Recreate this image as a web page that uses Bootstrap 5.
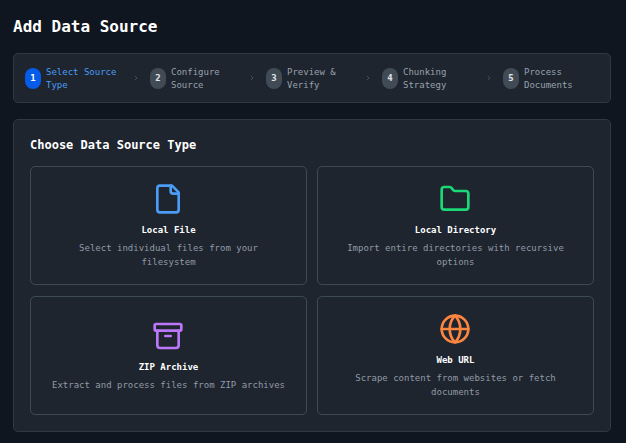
<!DOCTYPE html>
<html lang="en" data-bs-theme="dark">
<head>
<meta charset="utf-8">
<meta name="viewport" content="width=device-width, initial-scale=1">
<title>Add Data Source</title>
<link href="https://cdn.jsdelivr.net/npm/bootstrap@5.3.0/dist/css/bootstrap.min.css" rel="stylesheet">
<style>
body { background: #0f1620; color: #f9fafb; font-family: "DejaVu Sans Mono", "Liberation Mono", monospace; font-size: 9px; line-height: 14px; }
.page { padding: 16px 15px 11px 13px; }
.page-title { font-size: 16px; line-height: 21px; margin-bottom: 16px; }
.panel { background: #1e252f; border: 1px solid #2f3843; border-radius: 5px; }
.steps { padding: 10px 11px; margin-bottom: 16px; line-height: 13px; color: #99a1ac; }
.step { flex: 116 1 0; gap: 5px; }
.step-first { flex-grow: 125; color: #4b9cf5; }
.step-fourth { flex-grow: 121; }
.step-last { flex-grow: 96; }
.step-number { width: 16px; height: 21px; border-radius: 8px; background: #414b56; color: #e2e5e9; }
.step-first .step-number { background: #065be8; color: #fff; }
.step-label { flex: 1 1 0; padding-top: 2px; }
.chevron { width: 8px; height: 8px; margin-right: 10px; color: #56606c; }
.chooser { padding: 16px; }
.chooser-title { font-size: 12px; line-height: 18px; margin-bottom: 12px; }
.source-grid { display: grid; grid-template-columns: repeat(2, minmax(0, 1fr)); gap: 11px 10px; }
.source { min-height: 119px; padding: 15px 16px; background: transparent; border: 1px solid #3d4a54; border-radius: 5px; color: inherit; line-height: 14px; }
.source:hover { border-color: #5b6975; }
.source-icon { width: 32px; height: 32px; margin: 0 1px 8px 0; }
.source-name { margin-bottom: 4px; color: #fff; }
.source-text { color: #929aa6; }
.icon-file { color: #4b9cf5; }
.icon-folder { color: #1bd877; }
.icon-archive { color: #ba78f8; }
.icon-globe { color: #fc8540; }
svg { fill: none; stroke: currentColor; stroke-width: 2; stroke-linecap: round; stroke-linejoin: round; flex: none; }
</style>
</head>
<body>
<main class="page">
  <h1 class="page-title fw-bold">Add Data Source</h1>

  <ol class="panel steps d-flex align-items-center list-unstyled">
    <li class="step step-first d-flex align-items-center" aria-current="step">
      <span class="step-number d-flex align-items-center justify-content-center flex-shrink-0 fw-bold">1</span>
      <span class="step-label">Select Source Type</span>
      <svg class="chevron" viewBox="0 0 24 24" aria-hidden="true"><path d="m9 18 6-6-6-6"/></svg>
    </li>
    <li class="step d-flex align-items-center">
      <span class="step-number d-flex align-items-center justify-content-center flex-shrink-0 fw-bold">2</span>
      <span class="step-label">Configure Source</span>
      <svg class="chevron" viewBox="0 0 24 24" aria-hidden="true"><path d="m9 18 6-6-6-6"/></svg>
    </li>
    <li class="step d-flex align-items-center">
      <span class="step-number d-flex align-items-center justify-content-center flex-shrink-0 fw-bold">3</span>
      <span class="step-label">Preview &amp;<br>Verify</span>
      <svg class="chevron" viewBox="0 0 24 24" aria-hidden="true"><path d="m9 18 6-6-6-6"/></svg>
    </li>
    <li class="step step-fourth d-flex align-items-center">
      <span class="step-number d-flex align-items-center justify-content-center flex-shrink-0 fw-bold">4</span>
      <span class="step-label">Chunking Strategy</span>
      <svg class="chevron" viewBox="0 0 24 24" aria-hidden="true"><path d="m9 18 6-6-6-6"/></svg>
    </li>
    <li class="step step-last d-flex align-items-center">
      <span class="step-number d-flex align-items-center justify-content-center flex-shrink-0 fw-bold">5</span>
      <span class="step-label">Process Documents</span>
    </li>
  </ol>

  <section class="panel chooser" aria-labelledby="chooser-title">
    <h2 class="chooser-title fw-bold" id="chooser-title">Choose Data Source Type</h2>
    <div class="source-grid">
      <button type="button" class="source d-flex flex-column align-items-center justify-content-center text-center">
        <svg class="source-icon icon-file" viewBox="0 0 24 24" aria-hidden="true"><path d="M15 2H6a2 2 0 0 0-2 2v16a2 2 0 0 0 2 2h12a2 2 0 0 0 2-2V7Z"/><path d="M14 2v4a2 2 0 0 0 2 2h4"/></svg>
        <span class="source-name fw-bold">Local File</span>
        <span class="source-text">Select individual files from your<br>filesystem</span>
      </button>
      <button type="button" class="source d-flex flex-column align-items-center justify-content-center text-center">
        <svg class="source-icon icon-folder" viewBox="0 0 24 24" aria-hidden="true"><path d="M20 20a2 2 0 0 0 2-2V8a2 2 0 0 0-2-2h-7.900a2 2 0 0 1-1.690-.9L9.600 3.900A2 2 0 0 0 7.930 3H4a2 2 0 0 0-2 2v13a2 2 0 0 0 2 2Z"/></svg>
        <span class="source-name fw-bold">Local Directory</span>
        <span class="source-text">Import entire directories with recursive<br>options</span>
      </button>
      <button type="button" class="source d-flex flex-column align-items-center justify-content-center text-center">
        <svg class="source-icon icon-archive" viewBox="0 0 24 24" aria-hidden="true"><rect width="20" height="5" x="2" y="3" rx="1"/><path d="M4 8v11a2 2 0 0 0 2 2h12a2 2 0 0 0 2-2V8"/><path d="M10 12h4"/></svg>
        <span class="source-name fw-bold">ZIP Archive</span>
        <span class="source-text">Extract and process files from ZIP archives</span>
      </button>
      <button type="button" class="source d-flex flex-column align-items-center justify-content-center text-center">
        <svg class="source-icon icon-globe" viewBox="0 0 24 24" aria-hidden="true"><circle cx="12" cy="12" r="10"/><path d="M12 2a14.500 14.500 0 0 0 0 20 14.500 14.500 0 0 0 0-20"/><path d="M2 12h20"/></svg>
        <span class="source-name fw-bold">Web URL</span>
        <span class="source-text">Scrape content from websites or fetch<br>documents</span>
      </button>
    </div>
  </section>
</main>
<script src="https://cdn.jsdelivr.net/npm/bootstrap@5.3.0/dist/js/bootstrap.bundle.min.js"></script>
</body>
</html>
